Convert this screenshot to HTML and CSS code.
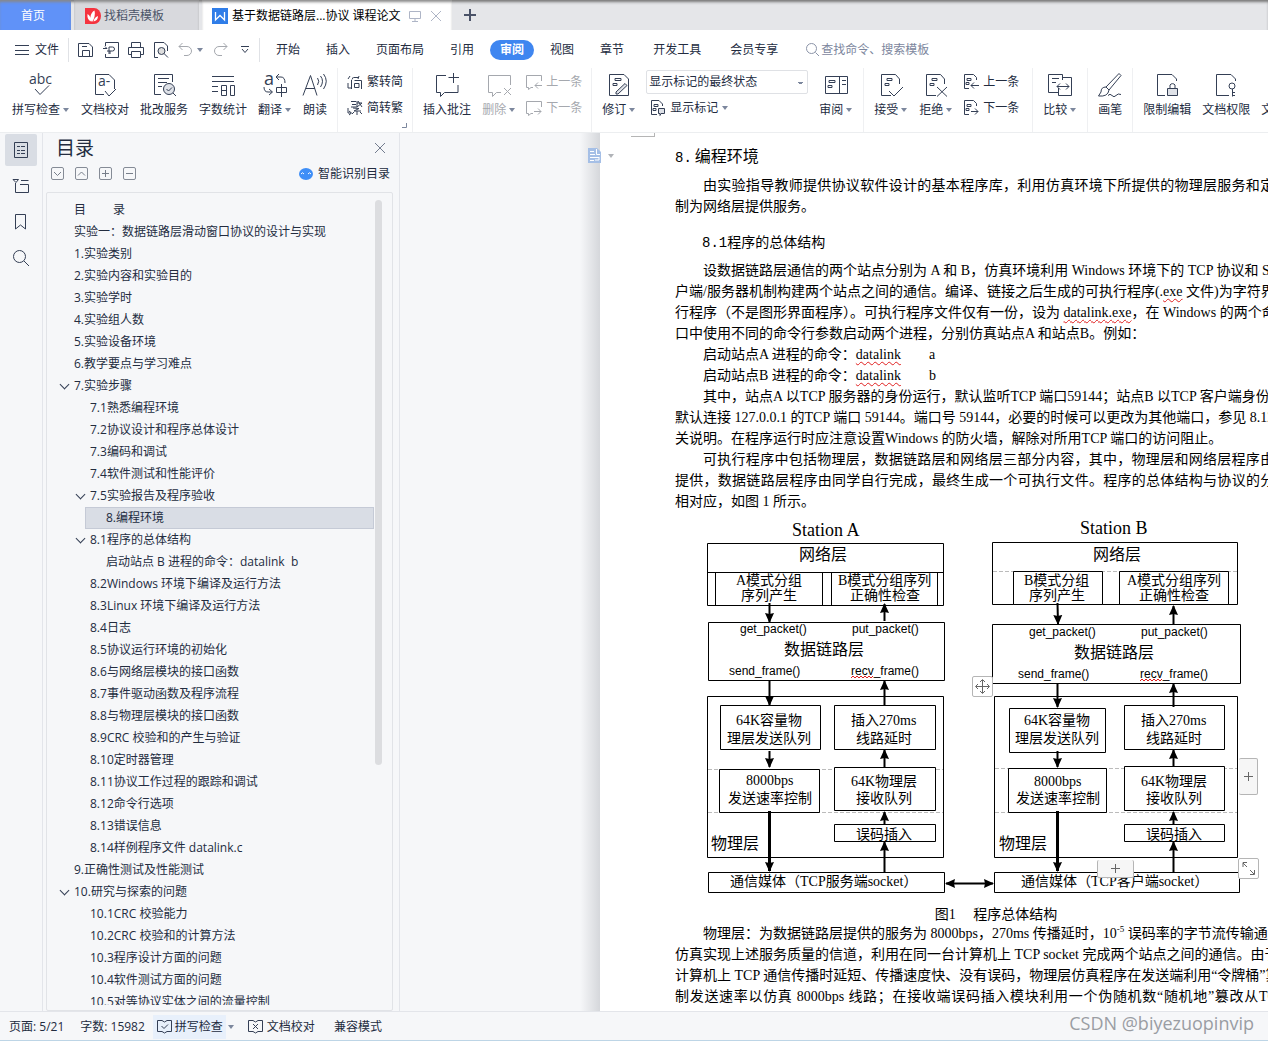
FILE: index.html
```html
<!DOCTYPE html>
<html lang="zh-CN">
<head>
<meta charset="utf-8">
<title>基于数据链路层...协议 课程论文</title>
<link rel="stylesheet" href="styles.css">
</head>
<body>
<svg class="defs" aria-hidden="true">
  <defs>
    <marker id="head" viewBox="0 0 10 10" refX="9" refY="5" markerWidth="10" markerHeight="10" markerUnits="userSpaceOnUse" orient="auto-start-reverse"><path d="M0 0.500L10 5L0 9.500L1 5Z"/></marker>
    <symbol id="page-lines" viewBox="0 0 16 16"><path d="M6 14.500H1.500V.5H10.500L13.500 3.500V6M4 4.500H8V6.500H4ZM3 8.500H6V10.500H3Z"/></symbol>
    <symbol id="big-page" viewBox="0 0 24 24"><path d="M12 22.500H2.500V1.500H16.500L20.500 6V11M8 5.500H13V7.500H8ZM6 10.500H10V12.500H6Z"/></symbol>
  </defs>
</svg>
<div class="app">
  <header class="tabs">
    <button class="tab home">首页</button>
    <button class="tab docer">
      <svg width="16" height="16" viewBox="0 0 16 16"><path fill="#f5333f" d="M0 0H9A7 8 0 0 1 9 16H0Z"/><path fill="#fff" d="M7 14C4.500 11 5 5 9.500 2.500C10.500 6 9.500 11 7 14ZM6 13.500C3 12 2 9.500 2.500 6C5 7.500 6 10 6 13.500ZM8.500 13.500C9 11 10 9 13 8C13 11 11.500 13 8.500 13.500Z"/></svg>
      找稻壳模板
    </button>
    <div class="tab current">
      <svg width="16" height="16" viewBox="0 0 16 16"><path fill="#2f7de8" d="M0 0H16V16H0Z"/><path fill="none" stroke="#fff" stroke-width="1.300" d="M3.500 4V12L8 7.500L12.500 12V4"/></svg>
      <span>基于数据链路层...协议 课程论文</span>
      <svg class="faint" width="12" height="12" viewBox="0 0 12 12"><path d="M.5 1.500H11.500V8.500H.5ZM6 8.500V11M3 11.500H9"/></svg>
      <button class="plain" aria-label="关闭标签"><svg class="faint" width="12" height="12" viewBox="0 0 12 12"><path d="M1 1L11 11M11 1L1 11"/></svg></button>
    </div>
    <button class="plain add" aria-label="新建标签"><svg width="12" height="12" viewBox="0 0 12 12"><path d="M6 0V12M0 6H12"/></svg></button>
  </header>

  <nav class="menu">
    <button class="plain file"><svg width="14" height="12" viewBox="0 0 14 12"><path d="M0 1.500H14M0 6.500H14M0 10.500H14"/></svg>文件</button>
    <i class="rule"></i>
    <div class="quick">
      <button class="plain" aria-label="保存"><svg width="16" height="16" viewBox="0 0 16 16"><path d="M4.500 14.500H.5V1.500H11L14.500 5V14.500H4.500V8.500H11.500V14.500M4 4.500H9"/></svg></button>
      <button class="plain" aria-label="输出为PDF"><svg width="16" height="16" viewBox="0 0 16 16"><path d="M2.500 4V.5H15.500V15.500H2.500V12M6 12V5H9.500A2 2 0 0 1 9.500 9H4M0 6.500H4L2 4.500M7 12V9"/></svg></button>
      <button class="plain" aria-label="打印"><svg width="16" height="16" viewBox="0 0 16 16"><path d="M3.500 5V.5H12.500V5M3.500 12.500H.5V5.500H15.500V12.500H12.500M3.500 9.500H12.500V15.500H3.500Z"/></svg></button>
      <button class="plain" aria-label="打印预览"><svg width="16" height="16" viewBox="0 0 16 16"><path d="M5 15.500H1.500V.5H11L14.500 4V9"/><circle cx="8.500" cy="9" r="3.500" fill="#ddd"/><path d="M11 11.500L15 15.500"/></svg></button>
      <button class="plain off" aria-label="撤销"><svg width="16" height="16" viewBox="0 0 16 16"><path d="M4.500 1L1 4.500L4.500 8M1 4.500H9A4.500 4.500 0 0 1 9 13.500H6"/></svg><b class="caret"></b></button>
      <button class="plain off" aria-label="恢复"><svg width="16" height="16" viewBox="0 0 16 16"><path d="M11.500 1L15 4.500L11.500 8M15 4.500H7A4.500 4.500 0 0 0 7 13.500H10"/></svg></button>
      <button class="plain" aria-label="更多"><svg width="8" height="8" viewBox="0 0 8 8"><path d="M0 .5H8M1 3L4 6.500L7 3"/></svg></button>
    </div>
    <i class="rule"></i>
    <div class="menus">
      <button>开始</button><button>插入</button><button>页面布局</button><button>引用</button><button class="on">审阅</button><button>视图</button><button>章节</button><button class="far">开发工具</button><button class="far">会员专享</button>
    </div>
    <label class="search"><svg width="15" height="15" viewBox="0 0 15 15"><circle cx="6.500" cy="6.500" r="5"/><path d="M10.500 10.500L14 14"/></svg><input type="text" placeholder="查找命令、搜索模板" aria-label="查找命令、搜索模板"></label>
  </nav>

  <section class="ribbon">
    <button class="tool"><svg width="26" height="26" viewBox="0 0 26 26"><text x="1" y="12" class="abc">abc</text><path d="M7 17L12 22.500L21 13.500"/></svg><span>拼写检查<b class="caret"></b></span></button>
    <button class="tool"><svg width="26" height="26" viewBox="0 0 26 26"><path d="M12 22.500H3.500V2.500H17L22.500 8V17M13 19L17 24L24 17"/><text x="6" y="14" class="abc">a-</text></svg><span>文档校对</span></button>
    <button class="tool"><svg width="26" height="26" viewBox="0 0 26 26"><path d="M10 22.500H3.500V2.500H21.500V10M7 6.500H18M7 10.500H16M7 14.500H11"/><circle cx="18" cy="17" r="5.500" fill="#dfe2e8"/><path d="M15.500 17L17.500 19L21 15.500M22 21L25 24"/></svg><span>批改服务</span></button>
    <button class="tool"><svg width="26" height="26" viewBox="0 0 26 26"><path d="M2 4.500H24M2 9.500H24M2 14.500H8M2 19.500H8M11.500 13.500H16.500V23.500H11.500ZM20.500 13.500H24.500V23.500H20.500ZM11.500 18.500H16.500"/></svg><span>字数统计</span></button>
    <button class="tool"><svg width="26" height="26" viewBox="0 0 26 26"><text x="2" y="13" class="a">a</text><path d="M17 2L14 5L17 8M14 5H19Q23 5 23 11M2 15Q2 20 6 20H10M7 17L10.500 20L7 23M14.500 15.500H24.500V20.500H14.500ZM19.500 12V25"/></svg><span>翻译<b class="caret"></b></span></button>
    <button class="tool"><svg width="26" height="26" viewBox="0 0 26 26"><path d="M1 23.500L8.500 3.500L15 23.500M4 16.500H13M15.500 6Q18 9 15.500 13M18.500 4Q22.500 9 18.500 15M21.500 2Q27 9 21.500 17"/></svg><span>朗读</span></button>
    <i class="bar"></i>
    <div class="pair">
      <button><svg width="16" height="16" viewBox="0 0 16 16"><path d="M3 2L1 5M1 9V14H4M4.500 6V15M6.500 3L5 5.500M7 3.500H11M12 2L11 5M7.500 6.500H14.500V15M7.500 9.500H12V13.500H7.500Z"/></svg>繁转简</button>
      <button><svg width="16" height="16" viewBox="0 0 16 16"><path d="M1 8V13H4M2 11L4.500 13L2 15M4 1.500H9M5 4.500H9M4 7H10V1M10 3H15M11 1L15 7M15 3L10 7M6 8L12 8.500L7 11H14M10 11V15M7 12L5 14M13 12L15 14"/></svg>简转繁</button>
    </div>
    <i class="bar"></i>
    <button class="tool"><svg width="26" height="26" viewBox="0 0 26 26"><path d="M12 3.500H2.500V20.500H6.500V24.500L10.500 20.500H24V13M19.500 1V11M14.500 5.500H25"/></svg><span>插入批注</span></button>
    <button class="tool off"><svg width="26" height="26" viewBox="0 0 26 26"><path d="M24.500 13V3.500H2.500V20.500H6.500V24.500L10.500 20.500H15M18 16L25 23M25 16L18 23"/></svg><span>删除<b class="caret"></b></span></button>
    <div class="pair off">
      <button><svg width="16" height="16" viewBox="0 0 16 16"><path d="M15.500 7V1.500H.5V13.500H2.500V15.500L5 13.500H7M16 11.500H9M12 8.500L9 11.500L12 14.500"/></svg>上一条</button>
      <button><svg width="16" height="16" viewBox="0 0 16 16"><path d="M15.500 7V1.500H.5V13.500H2.500V15.500L5 13.500H7M8 11.500H15M12 8.500L15 11.500L12 14.500"/></svg>下一条</button>
    </div>
    <i class="bar"></i>
    <button class="tool"><svg width="26" height="26" viewBox="0 0 26 26"><path d="M3.500 2.500H18L22.500 7V23.500H3.500ZM9 6.500H15V8.500H9ZM7 11.500H11V13.500H7Z"/><path fill="#dfe2e8" d="M10 20L19 11.500L21 13.500L12 22H10Z"/></svg><span>修订<b class="caret"></b></span></button>
    <div class="marks">
      <select aria-label="标记状态"><option>显示标记的最终状态</option></select>
      <button><svg width="16" height="16" viewBox="0 0 16 16"><path d="M7 14.500H1.500V.5H9L12.500 4V6M4 4.500H8V6.500H4ZM3 8.500H6V10.500H3Z"/><path fill="#dfe2e8" d="M8.500 8.500H14.500V13.500H11L10 15.500V13.500H8.500Z"/></svg>显示标记<b class="caret"></b></button>
    </div>
    <button class="tool"><svg width="26" height="26" viewBox="0 0 26 26"><path d="M2.500 4.500H24.500V21.500H2.500ZM16.500 4.500V21.500M6 8.500H12V10.500H6ZM5 13.500H9V15.500H5ZM19 8.500H23M19 12.500H23"/></svg><span>审阅<b class="caret"></b></span></button>
    <i class="bar"></i>
    <button class="tool"><svg width="26" height="26" viewBox="0 0 26 26"><use href="#big-page" x="1" y="1" width="24" height="24"/><path d="M11 19L16 24L25 15"/></svg><span>接受<b class="caret"></b></span></button>
    <button class="tool"><svg width="26" height="26" viewBox="0 0 26 26"><use href="#big-page" x="1" y="1" width="24" height="24"/><path d="M14 15L24 24.500M24 15L14 24.500"/></svg><span>拒绝<b class="caret"></b></span></button>
    <div class="pair loose">
      <button><svg width="16" height="16" viewBox="0 0 16 16"><use href="#page-lines" width="16" height="16"/><path d="M16 11.500H8M11 8.500L8 11.500L11 14.500"/></svg>上一条</button>
      <button><svg width="16" height="16" viewBox="0 0 16 16"><use href="#page-lines" width="16" height="16"/><path d="M8 11.500H15M12 8.500L15 11.500L12 14.500"/></svg>下一条</button>
    </div>
    <i class="bar"></i>
    <button class="tool"><svg width="26" height="26" viewBox="0 0 26 26"><path d="M11 20.500H1.500V2.500H15.500V8M15.500 5.500H24.500V23.500H11.500V16M5 6.500H12M5 10.500H9M10 14.500H22M13 11.500L10 14.500L13 17.500M19 11.500L22 14.500L19 17.500"/></svg><span>比较<b class="caret"></b></span></button>
    <i class="bar"></i>
    <button class="tool"><svg width="26" height="26" viewBox="0 0 26 26"><path d="M9 15L22 1.500L24 3.500L12 18M9 15Q4 15 4 20L1.500 24Q11 25 12 18ZM11 23.500Q13 21 15 23.500T19 23.500T24 22.500"/></svg><span>画笔</span></button>
    <i class="bar"></i>
    <button class="tool"><svg width="26" height="26" viewBox="0 0 26 26"><path d="M11 23.500H3.500V2.500H18L22.500 7V9M16 16V13A3 3 0 0 1 21 13V16"/><path fill="#dfe2e8" d="M13.500 16.500H23.500V23.500H13.500Z"/></svg><span>限制编辑</span></button>
    <button class="tool"><svg width="26" height="26" viewBox="0 0 26 26"><path d="M16 23.500H3.500V2.500H18L22.500 7V9"/><circle cx="19" cy="14" r="3"/><path d="M19.500 17V24.500M19.500 20.500H22M19.500 23.500H22"/></svg><span>文档权限</span></button>
    <button class="tool"><svg width="26" height="26" viewBox="0 0 26 26"></svg><span>文档认证</span></button>
    <svg class="corner" width="5" height="5" viewBox="0 0 5 5"><path d="M4.500 0V4.500H0"/></svg>
  </section>

  <main class="work">
    <aside class="rail">
      <button class="on" aria-label="目录"><svg width="16" height="18" viewBox="0 0 16 18"><path d="M1.500 1.500H14.500V16.500H1.500ZM4 5.500H7M8 5.500H12M4 9.500H7M8 9.500H12M4 12.500H7M8 12.500H12"/></svg></button>
      <button aria-label="章节"><svg width="16" height="16" viewBox="0 0 16 16"><path d="M0 1.500H5.500L3 4.500ZM2.500 5V14.500H15.500V6.500H7M8 2.500H15.500"/></svg></button>
      <button aria-label="书签"><svg width="16" height="18" viewBox="0 0 16 18"><path d="M2.500 1.500H12.500V16L7.500 12L2.500 16Z"/></svg></button>
      <button aria-label="查找"><svg width="18" height="18" viewBox="0 0 18 18"><circle cx="7.500" cy="7.500" r="6"/><path d="M12 12L17 17"/></svg></button>
    </aside>

    <aside class="outline">
      <div class="title"><h1>目录</h1><button class="plain" aria-label="关闭"><svg width="10" height="10" viewBox="0 0 10 10"><path d="M0 0L10 10M10 0L0 10"/></svg></button></div>
      <div class="levels">
        <button aria-label="展开"><svg width="7" height="7" viewBox="0 0 7 7"><path d="M0 2L3.500 5.500L7 2"/></svg></button>
        <button aria-label="收缩"><svg width="7" height="7" viewBox="0 0 7 7"><path d="M0 5.500L3.500 2L7 5.500"/></svg></button>
        <button aria-label="增加"><svg width="7" height="7" viewBox="0 0 7 7"><path d="M3.500 0V7M0 3.500H7"/></svg></button>
        <button aria-label="减少"><svg width="7" height="7" viewBox="0 0 7 7"><path d="M0 3.500H7"/></svg></button>
        <a href="#smart"><svg width="14" height="12" viewBox="0 0 14 12"><ellipse cx="7" cy="6" rx="7" ry="6" fill="#3e8ef7" stroke="none"/><path stroke="#fff" d="M2 6Q3.500 3.500 5 6M9 6Q10.500 3.500 12 6"/></svg>智能识别目录</a>
      </div>
      <div class="toc">
        <ul>
          <li><a href="#s">目　　 录</a></li>
          <li><a href="#s">实验一：数据链路层滑动窗口协议的设计与实现</a></li>
          <li><a href="#s">1.实验类别</a></li>
          <li><a href="#s">2.实验内容和实验目的</a></li>
          <li><a href="#s">3.实验学时</a></li>
          <li><a href="#s">4.实验组人数</a></li>
          <li><a href="#s">5.实验设备环境</a></li>
          <li><a href="#s">6.教学要点与学习难点</a></li>
          <li class="open"><a href="#s">7.实验步骤</a>
            <ul>
              <li><a href="#s">7.1熟悉编程环境</a></li>
              <li><a href="#s">7.2协议设计和程序总体设计</a></li>
              <li><a href="#s">7.3编码和调试</a></li>
              <li><a href="#s">7.4软件测试和性能评价</a></li>
              <li class="open"><a href="#s">7.5实验报告及程序验收</a>
                <ul><li><a href="#s8" class="here">8.编程环境</a></li></ul>
              </li>
              <li class="open"><a href="#s">8.1程序的总体结构</a>
                <ul><li><a href="#s">启动站点 B 进程的命令：datalink&nbsp; b</a></li></ul>
              </li>
              <li><a href="#s">8.2Windows 环境下编译及运行方法</a></li>
              <li><a href="#s">8.3Linux 环境下编译及运行方法</a></li>
              <li><a href="#s">8.4日志</a></li>
              <li><a href="#s">8.5协议运行环境的初始化</a></li>
              <li><a href="#s">8.6与网络层模块的接口函数</a></li>
              <li><a href="#s">8.7事件驱动函数及程序流程</a></li>
              <li><a href="#s">8.8与物理层模块的接口函数</a></li>
              <li><a href="#s">8.9CRC 校验和的产生与验证</a></li>
              <li><a href="#s">8.10定时器管理</a></li>
              <li><a href="#s">8.11协议工作过程的跟踪和调试</a></li>
              <li><a href="#s">8.12命令行选项</a></li>
              <li><a href="#s">8.13错误信息</a></li>
              <li><a href="#s">8.14样例程序文件 datalink.c</a></li>
            </ul>
          </li>
          <li><a href="#s">9.正确性测试及性能测试</a></li>
          <li class="open"><a href="#s">10.研究与探索的问题</a>
            <ul>
              <li><a href="#s">10.1CRC 校验能力</a></li>
              <li><a href="#s">10.2CRC 校验和的计算方法</a></li>
              <li><a href="#s">10.3程序设计方面的问题</a></li>
              <li><a href="#s">10.4软件测试方面的问题</a></li>
              <li><a href="#s">10.5对等协议实体之间的流量控制</a></li>
            </ul>
          </li>
        </ul>
        <i class="thumb"></i>
      </div>
    </aside>

    <div class="desk">
      <button class="plain note" aria-label="段落布局"><svg width="13" height="15" viewBox="0 0 13 15"><path fill="#a5bfe6" stroke="none" d="M0 0H9L13 4V15H0Z"/><path stroke="#fff" d="M2 3.500H6M2 6.500H7M2 9.500H11M2 12.500H6M8.500 1V6.500H12M11 9V12H7"/></svg><b class="caret"></b></button>
      <article class="paper" id="s8">
        <i class="crop"></i>
        <h2><span>8.</span>编程环境</h2>
        <p class="in fit">由实验指导教师提供协议软件设计的基本程序库，利用仿真环境下所提供的物理层服务和定时器机</p>
        <p>制为网络层提供服务。</p>
        <h3><span>8.1</span>程序的总体结构</h3>
        <p class="in">设数据链路层通信的两个站点分别为 A 和 B，仿真环境利用 Windows 环境下的 TCP 协议和 Socket 客</p>
        <p>户端/服务器机制构建两个站点之间的通信。编译、链接之后生成的可执行程序(.<u>exe</u> 文件)为字符界面的可执</p>
        <p>行程序（不是图形界面程序）。可执行程序文件仅有一份，设为 <u>datalink.exe</u>，在 Windows 的两个命令行窗</p>
        <p>口中使用不同的命令行参数启动两个进程，分别仿真站点A 和站点B。例如：</p>
        <p class="in">启动站点A 进程的命令：<u>datalink</u><span class="arg">a</span></p>
        <p class="in">启动站点B 进程的命令：<u>datalink</u><span class="arg">b</span></p>
        <p class="in">其中，站点A 以TCP 服务器的身份运行，默认监听TCP 端口59144；站点B 以TCP 客户端身份启动，</p>
        <p>默认连接 127.0.0.1 的TCP 端口 59144。端口号 59144，必要的时候可以更改为其他端口，参见 8.12 的相</p>
        <p>关说明。在程序运行时应注意设置Windows 的防火墙，解除对所用TCP 端口的访问阻止。</p>
        <p class="in fit">可执行程序中包括物理层，数据链路层和网络层三部分内容，其中，物理层和网络层程序由教师已</p>
        <p class="fit">提供，数据链路层程序由同学自行完成，最终生成一个可执行文件。程序的总体结构与协议的分层模型</p>
        <p>相对应，如图 1 所示。</p>
        <figure>
          <svg class="chart" width="593" height="391" viewBox="675 513 593 391">
            <g class="dash"><path d="M708 770.500H943M708 813.500H943M995 769.500H1237M995 813.500H1237M993 572.500H1237"/></g>
            <g class="box">
              <path d="M707.500 544.500H943.500V606.500H707.500ZM707.500 573.500H943.500M715.500 573.500V606.500M822.500 573.500V606.500M831.500 573.500V606.500M937.500 573.500V606.500"/>
              <path d="M708.500 623.500H944.500V681.500H708.500ZM707.500 697.500H943.500V858.500H707.500ZM708.500 873.500H944.500V893.500H708.500Z"/>
              <path class="fill" d="M720.500 706.500H820.500V750.500H720.500ZM834.500 706.500H935.500V750.500H834.500ZM719.500 770.500H819.500V813.500H719.500ZM834.500 768.500H935.500V811.500H834.500ZM834.500 825.500H935.500V842.500H834.500Z"/>
              <path d="M992.500 543.500H1237.500V605.500H992.500ZM992.500 625.500H1240.500V684.500H992.500ZM994.500 697.500H1237.500V858.500H994.500ZM994.500 873.500H1239.500V893.500H994.500Z"/>
              <path class="fill" d="M1013.500 572.500H1102.500V605.500H1013.500ZM1119.500 572.500H1228.500V605.500H1119.500ZM1009.500 709.500H1105.500V753.500H1009.500ZM1124.500 706.500H1224.500V750.500H1124.500ZM1008.500 769.500H1106.500V813.500H1008.500ZM1124.500 767.500H1224.500V811.500H1124.500ZM1124.500 825.500H1224.500V842.500H1124.500Z"/>
            </g>
            <g class="text">
              <text class="t18" x="792" y="537">Station A</text><text class="t18" x="1080" y="535">Station B</text>
              <text class="t16" x="799" y="561">网络层</text><text class="t16" x="1093" y="561">网络层</text>
              <text x="736" y="586">A模式分组</text><text x="741" y="601">序列产生</text>
              <text x="838" y="586">B模式分组序列</text><text x="850" y="601">正确性检查</text>
              <text x="1024" y="586">B模式分组</text><text x="1029" y="601">序列产生</text>
              <text x="1127" y="586">A模式分组序列</text><text x="1139" y="601">正确性检查</text>
              <text class="fn" x="740" y="634">get_packet()</text><text class="fn" x="852" y="634">put_packet()</text>
              <text class="fn" x="729" y="676">send_frame()</text><text class="fn" x="851" y="676">recv_frame()</text>
              <text class="fn" x="1029" y="637">get_packet()</text><text class="fn" x="1141" y="637">put_packet()</text>
              <text class="fn" x="1018" y="679">send_frame()</text><text class="fn" x="1140" y="679">recv_frame()</text>
              <text class="t16" x="784" y="656">数据链路层</text><text class="t16" x="1074" y="659">数据链路层</text>
              <text x="736" y="726">64K容量物</text><text x="727" y="744">理层发送队列</text>
              <text x="851" y="726">插入270ms</text><text x="856" y="744">线路延时</text>
              <text x="746" y="786">8000bps</text><text x="728" y="804">发送速率控制</text>
              <text x="851" y="787">64K物理层</text><text x="856" y="804">接收队列</text>
              <text x="856" y="840">误码插入</text><text class="t16" x="711" y="850">物理层</text>
              <text x="1024" y="726">64K容量物</text><text x="1015" y="744">理层发送队列</text>
              <text x="1141" y="726">插入270ms</text><text x="1146" y="744">线路延时</text>
              <text x="1034" y="787">8000bps</text><text x="1016" y="804">发送速率控制</text>
              <text x="1141" y="787">64K物理层</text><text x="1146" y="804">接收队列</text>
              <text x="1146" y="840">误码插入</text><text class="t16" x="999" y="850">物理层</text>
              <text x="730" y="887">通信媒体（TCP服务端socket）</text><text x="1021" y="887">通信媒体（TCP客户端socket）</text>
            </g>
            <path class="typo" d="M851 679l2 -2l2 2l2 -2l2 2l2 -2l2 2l2 -2l2 2l2 -2l2 2l2 -2M1140 682l2 -2l2 2l2 -2l2 2l2 -2l2 2l2 -2l2 2l2 -2l2 2l2 -2"/>
            <g class="arrow">
              <path d="M769.500 604V623"/><path d="M884.500 622V605"/><path d="M769.500 682V706"/><path d="M884.500 706V682"/>
              <path d="M769.500 752V768"/><path d="M884.500 768V751"/><path d="M884.500 825V813"/><path class="thick" d="M769.500 812V872"/><path d="M884.500 873V843"/>
              <path d="M1057.500 604L1058 625"/><path d="M1173.500 626V607"/><path d="M1057.500 685V708"/><path d="M1173.500 708V685"/>
              <path d="M1057.500 752V768"/><path d="M1173.500 767V751"/><path d="M1173.500 825V813"/><path class="thick" d="M1057.500 812V872"/><path d="M1173.500 873V843"/>
              <path class="both" d="M946 884.500H993"/>
            </g>
          </svg>
          <button class="grip move" aria-label="移动"><svg width="15" height="15" viewBox="0 0 15 15"><path d="M7.500 1V14M1 7.500H14M5 3L7.500 .5L10 3M5 12L7.500 14.500L10 12M3 5L.5 7.500L3 10M12 5L14.500 7.500L12 10"/></svg></button>
          <button class="grip col" aria-label="插入列"><svg width="9" height="9" viewBox="0 0 9 9"><path d="M4.500 0V9M0 4.500H9"/></svg></button>
          <button class="grip row" aria-label="插入行"><svg width="9" height="9" viewBox="0 0 9 9"><path d="M4.500 0V9M0 4.500H9"/></svg></button>
          <button class="grip size" aria-label="调整大小"><svg width="13" height="13" viewBox="0 0 13 13"><path d="M1 5V.5H5M1 1L5 5M12.500 8V12.500H8M12 12L8 8"/></svg></button>
          <figcaption>图1　 程序总体结构</figcaption>
        </figure>
        <p class="in">物理层：为数据链路层提供的服务为 8000bps，270ms 传播延时，10<sup>-5</sup> 误码率的字节流传输通道，可以</p>
        <p>仿真实现上述服务质量的信道，利用在同一台计算机上 TCP socket 完成两个站点之间的通信。由于在同一</p>
        <p>计算机上 TCP 通信传播时延短、传播速度快、没有误码，物理层仿真程序在发送端利用“令牌桶”算法控</p>
        <p class="fit">制发送速率以仿真 8000bps 线路；在接收端误码插入模块利用一个伪随机数“随机地”篡改从TCP 收到</p>
      </article>
    </div>
  </main>

  <footer class="status">
    <span class="cell">页面: 5/21</span>
    <span class="cell">字数: 15982</span>
    <button class="plain check"><svg width="15" height="15" viewBox="0 0 15 15"><path d="M5 1.500H.5V12.500H5L7.500 14L10 12.500H14.500V1.500H10L7.500 3L5 1.500M4.500 7L7 9.500L11 5.500"/></svg>拼写检查</button><b class="caret"></b>
    <button class="plain proof"><svg width="15" height="15" viewBox="0 0 15 15"><path d="M5 1.500H.5V12.500H5L7.500 14L10 12.500H14.500V1.500H10L7.500 3L5 1.500M5 5L10 10M10 5L5 10"/></svg>文档校对</button>
    <span class="cell mode">兼容模式</span>
    <span class="mark">CSDN @biyezuopinvip</span>
  </footer>
</div>
</body>
</html>
```
FILE: styles.css
```css
* { box-sizing: border-box; }
body { margin: 0; color: #232c3f; font: 12px/16px "Open Sans", "Noto Sans CJK SC", sans-serif; }
button, input, select { font: inherit; color: inherit; margin: 0; }
button { padding: 0; border: 0; background: none; white-space: nowrap; }
a { color: inherit; text-decoration: none; }
svg { display: block; flex: none; fill: none; stroke: #343f55; overflow: visible; }
.defs { position: absolute; width: 0; height: 0; }
.app { display: flex; flex-direction: column; height: 100vh; overflow: hidden; background: #fff; }
.plain { display: flex; align-items: center; }
.caret { flex: none; width: 0; height: 0; border: 3px solid transparent; border-top: 4px solid #7c879d; border-bottom: 0; }
.off, .off svg { color: #a5a8ae; stroke: #a5a8ae; }

/* document tabs */
.tabs { display: flex; flex: none; gap: 3px; height: 30px; background: #e5e6e9; box-shadow: inset 0 3px 3px -1px #777; }
.tab { display: flex; align-items: center; padding-top: 2px; }
.home { width: 71px; justify-content: center; padding-right: 5px; color: #fff; background: #6092f8; }
.tabs .docer { width: 125px; padding-left: 11px; gap: 3px; color: #4b5468; background: #d8d9dd; }
.tab svg { stroke: none; }
.current { width: 250px; padding-left: 10px; gap: 4px; color: #000; background: #fff; }
.current span { margin-right: 4px; white-space: nowrap; }
.current .plain { margin-left: 5px; }
.tab .faint { stroke: #aeb5c6; }
.tabs > button, .current { box-shadow: inset 0 3px 3px -1px #888; }
.add { margin-left: 9px; }
.tabs > .add { box-shadow: none; }
.add svg { stroke: #4a5267; stroke-width: 2; }

/* menu row */
.menu { display: flex; flex: none; align-items: center; height: 38px; padding: 1px 0 0 15px; }
.file { gap: 6px; }
.rule { width: 1px; height: 24px; margin: 0 6px 0 9px; background: #e0e2e6; }
.quick { display: flex; gap: 9px; padding-left: 3px; width: 175px; }
.quick .caret { margin-left: 3px; }
.quick .plain:last-child { margin-left: 4px; }
.menus { display: flex; gap: 6px; }
.menus button { height: 20px; padding: 0 10px; border-radius: 10px; }
.menus .on { color: #fff; background: #3f86f0; font-weight: bold; }
.menus .far { margin-left: 3px; }
.search { display: flex; align-items: center; gap: 1px; margin-left: 17px; }
.search svg { stroke: #8b94a8; }
.search input { width: 160px; padding: 0; border: 0; outline: 0; background: none; }
.search input::placeholder { color: #7c869d; opacity: 1; }

/* ribbon */
.ribbon { position: relative; z-index: 2; display: flex; flex: none; gap: 11px; height: 65px; padding: 4px 0 0 12px; overflow: hidden; border-bottom: 1px solid #eceef0; }
.tool { display: flex; flex: none; flex-direction: column; align-items: center; height: 48px; }
.tool svg { margin: 0 -1px; }
.tool span { display: flex; align-items: center; margin-top: 4px; }
.tool .caret { margin: 0 1px 0 3px; }
.tool svg text { fill: #343f55; stroke: none; }
.abc { font-size: 14px; }
.a { font-size: 18px; }
.off text { fill: #a5a8ae; }
.bar { flex: none; width: 1px; height: 64px; margin: -4px -1px 0; background: #eff0f2; }
.pair { display: flex; flex: none; flex-direction: column; gap: 10px; margin: 2px -1px 0; }
.pair button, .marks button { display: flex; align-items: center; gap: 4px; }
.loose { padding-right: 4px; }
.marks { flex: none; width: 162px; margin: -2px 0 0 -1px; }
.marks select { display: block; width: 100%; height: 24px; padding: 0 2px; border: 1px solid #dfe1e5; border-radius: 2px; appearance: none; background: linear-gradient(#7c879d, #7c879d) no-repeat right 4px center / 5px 1px, linear-gradient(#7c879d, #7c879d) no-repeat right 5px top 12px / 3px 1px, #fff; }
.marks button { margin: 6px 0 0 4px; }
.corner { position: absolute; left: 402px; bottom: 4px; stroke: #7c879d; }

/* workspace */
.work { display: flex; flex: 1; min-height: 0; background: #f6f7f9; }
.rail { display: flex; flex: none; flex-direction: column; gap: 4px; width: 43px; padding: 1px 5px; border-right: 1px solid #e3e5ea; }
.rail button { display: grid; place-items: center; width: 32px; height: 32px; border-radius: 2px; }
.rail .on { background: #d9dde4; }
.outline { display: flex; flex: none; flex-direction: column; width: 357px; padding: 0 6px 0 3px; border-right: 1px solid #e3e5ea; }
.title { display: flex; align-items: center; justify-content: space-between; height: 29px; padding: 0 8px 0 10px; }
.title h1 { margin: 0; font-size: 19px; line-height: 24px; font-weight: normal; }
.title svg { stroke: #737c8e; }
.levels { display: flex; align-items: center; gap: 11px; height: 23px; padding: 0 3px 0 5px; }
.levels button { display: grid; place-items: center; width: 13px; height: 13px; border: 1px solid #858b96; border-radius: 2px; }
.levels button svg { stroke: #777e8a; }
.levels a { display: flex; align-items: center; gap: 5px; margin-left: auto; }
.toc { display: flex; flex: 1; min-height: 0; margin-top: 7px; padding: 6px 10px 5px 0; border: 1px solid #e1e3e7; border-radius: 2px; overflow: hidden; }
.toc > ul { flex: 1; overflow: hidden; padding-right: 1px; }
.toc ul { margin: 0; list-style: none; }
.toc > ul { padding-left: 27px; }
.toc ul ul { padding-left: 16px; }
.toc li { position: relative; }
.toc a { display: block; height: 22px; line-height: 22px; white-space: nowrap; }
.toc .here { margin-left: -21px; padding-left: 20px; line-height: 20px; border: 1px solid #c5cad6; background: #d9dde5; }
.toc .open::before { content: ""; position: absolute; left: -13px; top: 6px; width: 6px; height: 6px; border: solid #343f55; border-width: 0 1px 1px 0; transform: rotate(45deg); }
.thumb { flex: none; width: 7px; height: 565px; margin-top: 1px; border-radius: 4px; background: #dcdde0; }

/* page */
.desk { position: relative; display: flex; flex: 1; min-width: 0; overflow: hidden; padding-left: 200px; background: linear-gradient(90deg, #f6f7f9 180px, #d5d7db 200px); }
.note { position: absolute; left: 188px; top: 15px; gap: 7px; z-index: 1; }
.note .caret { border-top-color: #b0b3b8; }
.paper { position: relative; flex: 1; min-width: 0; padding: 14px 0 0 75px; overflow: hidden; background: #fff; color: #000; font: 14px/21px "Liberation Serif", "Noto Sans CJK SC", serif; }
.crop { position: absolute; left: 31px; top: 0; width: 24px; height: 4px; border: solid #b5b5b5; border-width: 0 1px 1px 0; }
.paper h2, .paper h3, .paper p { margin: 0; font-weight: normal; white-space: nowrap; }
.paper p { width: 642px; height: 21px; }
.paper h2 { margin-bottom: 7px; font-size: 16px; line-height: 20px; }
.paper h2 span, .paper h3 span { font-family: "Liberation Mono", monospace; font-size: 14px; }
.paper h2 span { margin-right: 3px; }
.paper h3 { margin: 15px 0 6px 27px; font-size: 14px; }
.paper .in { padding-left: 28px; }
.paper .fit { white-space: normal; text-align: justify; text-align-last: justify; }
.paper u { text-decoration: underline wavy #e02020 1px; text-underline-offset: 2px; text-decoration-skip-ink: none; }
.arg { margin-left: 28px; }
sup { font-size: 9px; line-height: 0; }
figure { position: relative; width: 642px; margin: 0; }
figcaption { height: 20px; line-height: 24px; text-align: center; }
.box { stroke: #000; }
.fill { fill: #fff; }
.dash { stroke: #bbb; stroke-dasharray: 4 2; }
.text { stroke: none; fill: #000; font-size: 14px; }
.t16 { font-size: 16px; }
.t18 { font-size: 18px; }
.fn { font: 12px "Liberation Sans", sans-serif; }
.typo { stroke: #e02020; }
.arrow { stroke: #000; stroke-width: 2; }
.arrow path { marker-end: url(#head); }
.arrow .thick { stroke-width: 3; }
.arrow .both { marker-start: url(#head); }
#head path { fill: #000; stroke: none; }
.grip { position: absolute; display: grid; place-items: center; border: 1px solid #b5b5b5; border-radius: 2px; background: #fff; }
.grip svg { stroke: #666; }
.move { left: 297px; top: 164px; width: 21px; height: 21px; }
.col { left: 564px; top: 246px; width: 19px; height: 37px; border-left: 0; background: #f6f6f6; }
.row { left: 422px; top: 348px; width: 37px; height: 18px; border-top: 0; background: #f6f6f6; }
.size { left: 563px; top: 346px; width: 21px; height: 21px; }

/* status bar */
.status { display: flex; flex: none; align-items: center; height: 30px; padding: 1px 0 0 9px; border-top: 1px solid #e3e5ea; border-bottom: 1px solid #bdd5e6; background: #f6f7f9; white-space: nowrap; }
.cell { margin-right: 16px; }
.cell + .cell { margin-right: 8px; }
.check { gap: 3px; height: 24px; padding: 0 3px 0 4px; background: #e8f0fb; }
.status .caret { margin-left: 2px; }
.proof { gap: 4px; margin: 0 19px 0 14px; }
.mark { margin: -8px 14px 0 auto; color: #9a9da3; font: 18px/20px "Open Sans", sans-serif; }
```
